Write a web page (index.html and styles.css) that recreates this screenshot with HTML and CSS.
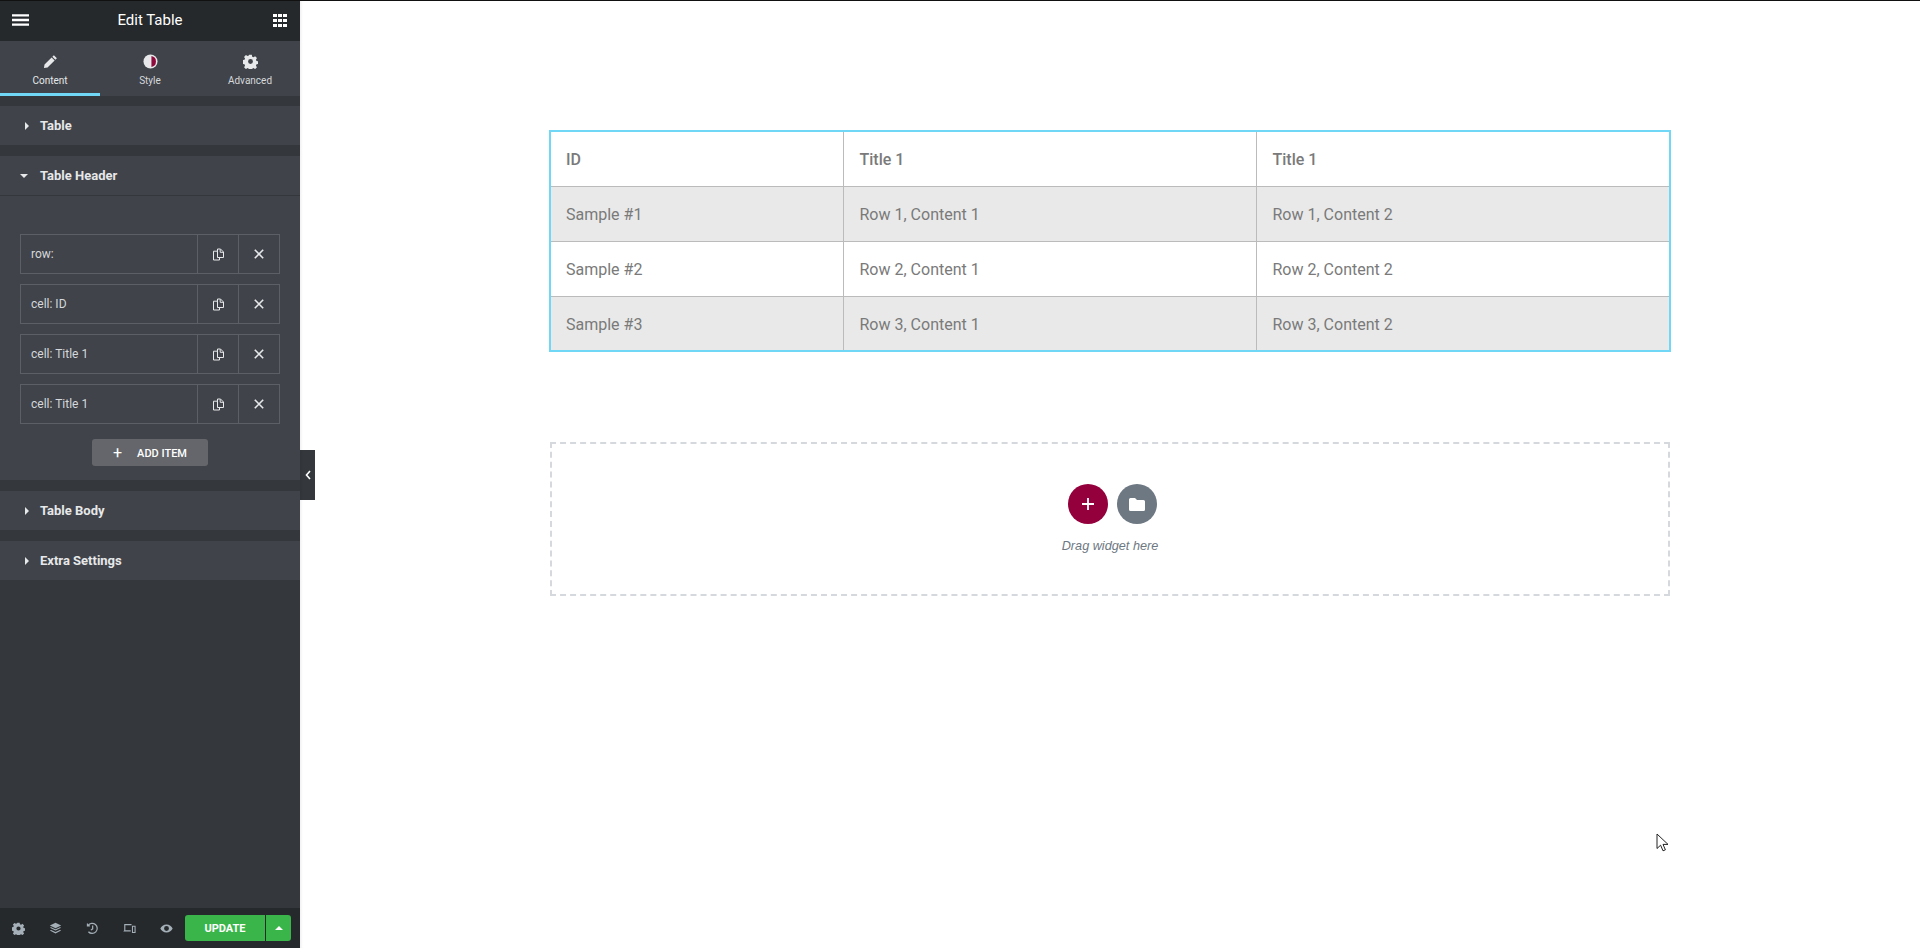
FILE: index.html
```html
<!DOCTYPE html>
<html lang="en">
<head>
    <meta charset="UTF-8">
    <title>Edit Table</title>
    <link rel="stylesheet" href="styles.css">
</head>
<body>
    <div class="page">
        <aside class="panel">
            <header class="panel-header">
                <svg class="menu-icon" viewBox="0 0 18 12"><path d="M0 0h18v2.4H0zM0 4.8h18v2.4H0zM0 9.6h18V12H0z"/></svg>
                <span class="panel-title">Edit Table</span>
                <svg class="grid-icon" viewBox="0 0 14 13"><path d="M0 0h4v3H0zM5 0h4v3H5zM10 0h4v3h-4zM0 5h4v3H0zM5 5h4v3H5zM10 5h4v3h-4zM0 10h4v3H0zM5 10h4v3H5zM10 10h4v3h-4z"/></svg>
            </header>
            <nav class="tabs">
                <div class="tab active">
                    <svg class="tab-icon" viewBox="0 0 16 16"><path d="M11.6 1.2l3.2 3.2-1.6 1.6L10 2.8zM9.2 3.6l3.2 3.2-7.6 7.6L1 15l.6-3.8z"/></svg>
                    <span>Content</span>
                </div>
                <div class="tab">
                    <svg class="tab-icon" viewBox="0 0 16 16"><circle cx="8" cy="8" r="7.5" fill="#e6e8ea"/><path d="M9 2.2a5.9 5.9 0 0 1 0 11.6z" fill="#8f0a3c"/></svg>
                    <span>Style</span>
                </div>
                <div class="tab">
                    <svg class="tab-icon" viewBox="0 0 16 16"><path fill-rule="evenodd" d="M6.6.8h2.8l.4 2 1.4.6 1.7-1.1 2 2-1.1 1.7.6 1.4 2 .4v2.8l-2 .4-.6 1.4 1.1 1.7-2 2-1.7-1.1-1.4.6-.4 2H6.6l-.4-2-1.4-.6-1.7 1.1-2-2 1.1-1.7-.6-1.4-2-.4V6.6l2-.4.6-1.4-1.1-1.7 2-2 1.7 1.1 1.4-.6zM8 5.4a2.6 2.6 0 1 0 0 5.2 2.6 2.6 0 0 0 0-5.2z"/></svg>
                    <span>Advanced</span>
                </div>
            </nav>

            <section class="section">
                <div class="section-head"><i class="caret"></i>Table</div>
            </section>

            <section class="section">
                <div class="section-head open"><i class="caret down"></i>Table Header</div>
                <div class="repeater">
                    <div class="item">
                        <span class="item-label">row:</span>
                        <span class="item-btn"><svg class="copy-icon" viewBox="0 0 11 12"><path d="M4.5.5h3l3 3v5.5h-6zM7.2.8v3h3M4.5 2.7h-4v8.8h6V9"/></svg></span>
                        <span class="item-btn"><svg class="close-icon" viewBox="0 0 10 10"><path d="M.8.8l8.4 8.4M9.2.8L.8 9.2"/></svg></span>
                    </div>
                    <div class="item">
                        <span class="item-label">cell: ID</span>
                        <span class="item-btn"><svg class="copy-icon" viewBox="0 0 11 12"><path d="M4.5.5h3l3 3v5.5h-6zM7.2.8v3h3M4.5 2.7h-4v8.8h6V9"/></svg></span>
                        <span class="item-btn"><svg class="close-icon" viewBox="0 0 10 10"><path d="M.8.8l8.4 8.4M9.2.8L.8 9.2"/></svg></span>
                    </div>
                    <div class="item">
                        <span class="item-label">cell: Title 1</span>
                        <span class="item-btn"><svg class="copy-icon" viewBox="0 0 11 12"><path d="M4.5.5h3l3 3v5.5h-6zM7.2.8v3h3M4.5 2.7h-4v8.8h6V9"/></svg></span>
                        <span class="item-btn"><svg class="close-icon" viewBox="0 0 10 10"><path d="M.8.8l8.4 8.4M9.2.8L.8 9.2"/></svg></span>
                    </div>
                    <div class="item">
                        <span class="item-label">cell: Title 1</span>
                        <span class="item-btn"><svg class="copy-icon" viewBox="0 0 11 12"><path d="M4.5.5h3l3 3v5.5h-6zM7.2.8v3h3M4.5 2.7h-4v8.8h6V9"/></svg></span>
                        <span class="item-btn"><svg class="close-icon" viewBox="0 0 10 10"><path d="M.8.8l8.4 8.4M9.2.8L.8 9.2"/></svg></span>
                    </div>
                    <button class="add-item"><span class="add-plus">+</span>ADD ITEM</button>
                </div>
            </section>

            <section class="section">
                <div class="section-head"><i class="caret"></i>Table Body</div>
            </section>

            <section class="section">
                <div class="section-head"><i class="caret"></i>Extra Settings</div>
            </section>

            <footer class="panel-footer">
                <svg class="foot-icon" viewBox="0 0 16 16"><path fill-rule="evenodd" d="M6.6.8h2.8l.4 2 1.4.6 1.7-1.1 2 2-1.1 1.7.6 1.4 2 .4v2.8l-2 .4-.6 1.4 1.1 1.7-2 2-1.7-1.1-1.4.6-.4 2H6.6l-.4-2-1.4-.6-1.7 1.1-2-2 1.1-1.7-.6-1.4-2-.4V6.6l2-.4.6-1.4-1.1-1.7 2-2 1.7 1.1 1.4-.6zM8 5.4a2.6 2.6 0 1 0 0 5.2 2.6 2.6 0 0 0 0-5.2z"/></svg>
                <svg class="foot-icon" viewBox="0 0 16 16"><path d="M8 1l7 3.4-7 3.4-7-3.4z"/><path d="M1 7.2l1.6-.8L8 9l5.4-2.6 1.6.8-7 3.4z"/><path d="M1 10.6l1.6-.8L8 12.4l5.4-2.6 1.6.8L8 14z"/></svg>
                <svg class="foot-icon line" viewBox="0 0 16 16"><path d="M2.6 4.2A6.2 6.2 0 1 1 3 12M1.8 1.8v3h3M8.2 4.4v4l-2.2 1.6"/></svg>
                <svg class="foot-icon" viewBox="0 0 16 16"><path fill-rule="evenodd" d="M1.500 2.500h9v1.400h-7.600v6.100h6.600v1.600H.4l1.100-1.600zM11 4.500h4.500v9H11zM12.300 5.800v6.400h1.900V5.800z"/></svg>
                <svg class="foot-icon" viewBox="0 0 16 16"><path fill-rule="evenodd" d="M8 3c3.6 0 6.400 2.400 7.600 5-1.200 2.600-4 5-7.600 5S1.600 10.600.4 8C1.600 5.400 4.400 3 8 3zm0 2a3 3 0 1 0 0 6 3 3 0 0 0 0-6z"/></svg>
                <div class="update-group">
                    <button class="update-btn">UPDATE</button>
                    <button class="update-arrow"><i class="caret up"></i></button>
                </div>
            </footer>

            <div class="panel-toggle">
                <svg viewBox="0 0 6 10"><path d="M5 1L1.500 5 5 9"/></svg>
            </div>
        </aside>

        <main class="canvas">
            <table class="data-table">
                <thead>
                    <tr><th>ID</th><th>Title 1</th><th>Title 1</th></tr>
                </thead>
                <tbody>
                    <tr><td>Sample #1</td><td>Row 1, Content 1</td><td>Row 1, Content 2</td></tr>
                    <tr><td>Sample #2</td><td>Row 2, Content 1</td><td>Row 2, Content 2</td></tr>
                    <tr><td>Sample #3</td><td>Row 3, Content 1</td><td>Row 3, Content 2</td></tr>
                </tbody>
            </table>

            <div class="dropzone">
                <div class="drop-buttons">
                    <span class="round-btn add"><svg viewBox="0 0 12 12"><path d="M6 0v12M0 6h12"/></svg></span>
                    <span class="round-btn folder"><svg viewBox="0 0 16 13"><path d="M1.500 0h4.500l2 2h6.500A1.500 1.500 0 0 1 16 3.500v8a1.500 1.500 0 0 1-1.500 1.500h-13A1.500 1.500 0 0 1 0 11.500v-10A1.500 1.500 0 0 1 1.500 0z"/></svg></span>
                </div>
                <p class="drop-text">Drag widget here</p>
            </div>

            <svg class="cursor" viewBox="0 0 14 20"><path d="M1 1v14.500l3.600-3.300 2.400 5.600 2.400-1-2.400-5.400h5z"/></svg>
        </main>
    </div>
</body>
</html>
```

FILE: styles.css
```css
* {
    box-sizing: border-box;
}
html, body {
    margin: 0;
    padding: 0;
    height: 100%;
    overflow: hidden;
}
body {
    font-family: Roboto, Arial, sans-serif;
    background-color: #fff;
}
.page {
    display: flex;
    height: 948px;
    border-top: 1px solid #111;
}

/* left panel */
.panel {
    position: relative;
    width: 300px;
    flex: none;
    display: flex;
    flex-direction: column;
    background-color: #34383c;
    color: #e6e8ea;
}
.panel-header {
    height: 40px;
    flex: none;
    display: flex;
    align-items: center;
    justify-content: space-between;
    padding: 0 13px 2px 12px;
    background-color: #26292c;
}
.panel-title {
    font-size: 15px;
    color: #fff;
    margin-right: 2px;
}
.menu-icon {
    width: 17px;
    height: 12px;
    fill: #fff;
}
.grid-icon {
    width: 14px;
    height: 13px;
    fill: #fff;
}
.tabs {
    display: flex;
    height: 55px;
    flex: none;
    background-color: #404349;
}
.tab {
    width: 100px;
    display: flex;
    flex-direction: column;
    align-items: center;
    padding-top: 13px;
    font-size: 10px;
    color: #d5d8dc;
    border-bottom: 3px solid transparent;
}
.tab.active {
    border-bottom-color: #71d7f7;
    color: #e6e8ea;
}
.tab-icon {
    width: 15px;
    height: 15px;
    margin-bottom: 6px;
    fill: #e6e8ea;
}
.section {
    margin-top: 11px;
    background-color: #404349;
}
.section:first-of-type {
    margin-top: 10px;
}
.section-head {
    height: 39px;
    display: flex;
    align-items: center;
    padding-left: 25px;
    font-size: 13px;
    font-weight: 700;
    color: #e6e8ea;
}
.section-head.open {
    border-bottom: 1px solid #34383c;
    height: 40px;
}
.caret {
    width: 0;
    height: 0;
    margin-right: 11px;
    border-style: solid;
    border-width: 4px 0 4px 4px;
    border-color: transparent transparent transparent #e6e8ea;
}
.caret.down {
    margin-left: -5px;
    margin-right: 12px;
    border-width: 4px 4px 0 4px;
    border-color: #e6e8ea transparent transparent transparent;
}
.caret.up {
    margin: 0;
    border-width: 0 4px 4px 4px;
    border-color: transparent transparent #fff transparent;
    display: block;
}
.repeater {
    display: flex;
    flex-direction: column;
    gap: 10px;
    padding: 38px 20px 14px;
}
.item {
    display: flex;
    height: 40px;
    border: 1px solid #5c5f65;
}
.item-label {
    flex: 1;
    display: flex;
    align-items: center;
    padding-left: 10px;
    font-size: 12px;
    color: #d5d8dc;
}
.item-btn {
    width: 41px;
    display: flex;
    align-items: center;
    justify-content: center;
    border-left: 1px solid #5c5f65;
}
.copy-icon {
    width: 11px;
    height: 13px;
    fill: none;
    stroke: #e6e8ea;
    stroke-width: 1;
}
.close-icon {
    width: 10px;
    height: 10px;
    fill: none;
    stroke: #e6e8ea;
    stroke-width: 1.600;
}
.add-item {
    align-self: center;
    width: 116px;
    height: 27px;
    margin-top: 5px;
    border: 0;
    border-radius: 3px;
    background-color: #64666b;
    color: #fff;
    font-family: Roboto, Arial, sans-serif;
    font-size: 11px;
    font-weight: 500;
}
.add-plus {
    font-size: 16px;
    font-weight: 400;
    margin-right: 15px;
    vertical-align: -1px;
}
.panel-footer {
    margin-top: auto;
    height: 40px;
    flex: none;
    display: flex;
    align-items: center;
    padding-left: 12px;
    background-color: #26292c;
}
.foot-icon {
    width: 13px;
    height: 13px;
    margin-right: 24px;
    fill: #a4afb7;
}
.foot-icon.line {
    fill: none;
    stroke: #a4afb7;
    stroke-width: 1.500;
}
.update-group {
    display: flex;
    margin-left: -12px;
    height: 26px;
}
.update-btn {
    width: 80px;
    border: 0;
    border-radius: 3px 0 0 3px;
    background-color: #39b54a;
    color: #fff;
    font-family: Roboto, Arial, sans-serif;
    font-size: 11px;
    font-weight: 700;
}
.update-arrow {
    width: 26px;
    border: 0;
    border-left: 1px solid #26292c;
    border-radius: 0 3px 3px 0;
    background-color: #39b54a;
    display: flex;
    align-items: center;
    justify-content: center;
}
.panel-toggle {
    position: absolute;
    left: 300px;
    top: 449px;
    width: 15px;
    height: 50px;
    display: flex;
    align-items: center;
    justify-content: center;
    background-color: #34383c;
}
.panel-toggle svg {
    width: 6px;
    height: 10px;
    fill: none;
    stroke: #fff;
    stroke-width: 1.600;
}

/* page canvas */
.canvas {
    position: relative;
    flex: 1;
    padding: 129px 249px 0 249px;
    box-shadow: inset 3px 0 3px -2px rgba(0, 0, 0, 0.08);
}
.data-table {
    width: 100%;
    table-layout: fixed;
    border-collapse: collapse;
    border: 2px solid #71d7f7;
    font-size: 16px;
    color: #7a7a7a;
}
.data-table th,
.data-table td {
    height: 55px;
    padding: 2px 15px 0 16px;
    text-align: left;
    border: 1px solid #bbb;
}
.data-table tr > :first-child {
    padding-left: 15px;
    border-left: 2px solid #71d7f7;
}
.data-table th {
    font-weight: 500;
}
.data-table th:first-child,
.data-table td:first-child {
    width: 293px;
}
.data-table th:nth-child(2),
.data-table td:nth-child(2) {
    width: 413px;
}
.data-table tbody tr:nth-child(odd) {
    background-color: #e9e9e9;
}
.data-table tr > :last-child {
    border-right: 2px solid #71d7f7;
}
.data-table tbody tr:last-child td {
    border-bottom: 2px solid #71d7f7;
}
.dropzone {
    height: 154px;
    margin: 90px 1px 0;
    padding-top: 40px;
    border: 2px dashed #d5d8dc;
    text-align: center;
}
.drop-buttons {
    display: flex;
    justify-content: center;
    gap: 9px;
    padding-left: 5px;
}
.round-btn {
    width: 40px;
    height: 40px;
    border-radius: 50%;
    display: flex;
    align-items: center;
    justify-content: center;
}
.round-btn.add {
    background-color: #93003c;
}
.round-btn.add svg {
    width: 12px;
    height: 12px;
    fill: none;
    stroke: #fff;
    stroke-width: 1.800;
}
.round-btn.folder {
    background-color: #6d7882;
}
.round-btn.folder svg {
    width: 16px;
    height: 13px;
    fill: #fff;
}
.drop-text {
    margin: 15px 0 0;
    font-family: "Liberation Sans", Arial, sans-serif;
    font-size: 12.7px;
    font-style: italic;
    color: #6d7882;
}
.cursor {
    position: absolute;
    left: 1356px;
    top: 832px;
    width: 14px;
    height: 20px;
    fill: #fff;
    stroke: #222;
    stroke-width: 1;
}
```
